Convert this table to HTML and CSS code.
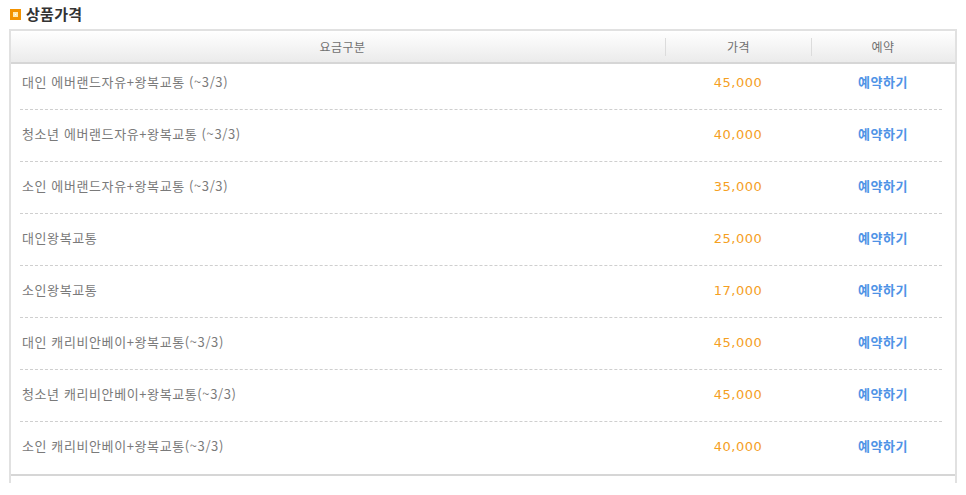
FILE: index.html
```html
<!DOCTYPE html>
<html lang="ko">
<head>
<meta charset="utf-8">
<title>상품가격</title>
<link rel="stylesheet" href="styles.css">
</head>
<body>
<div class="title">
  <span class="title-icon"></span>
  <h2 class="title-text">상품가격</h2>
</div>
<div class="box">
  <div class="head">
    <div class="hcell hcell-name">요금구분</div>
    <div class="hsep"></div>
    <div class="hcell">가격</div>
    <div class="hsep"></div>
    <div class="hcell">예약</div>
  </div>
  <div class="rows">
    <div class="row first"><div class="name">대인 에버랜드자유+왕복교통 (~3/3)</div><div class="price">45,000</div><div class="book"><a href="#">예약하기</a></div></div>
    <div class="row"><div class="name">청소년 에버랜드자유+왕복교통 (~3/3)</div><div class="price">40,000</div><div class="book"><a href="#">예약하기</a></div></div>
    <div class="row"><div class="name">소인 에버랜드자유+왕복교통 (~3/3)</div><div class="price">35,000</div><div class="book"><a href="#">예약하기</a></div></div>
    <div class="row"><div class="name">대인왕복교통</div><div class="price">25,000</div><div class="book"><a href="#">예약하기</a></div></div>
    <div class="row"><div class="name">소인왕복교통</div><div class="price">17,000</div><div class="book"><a href="#">예약하기</a></div></div>
    <div class="row"><div class="name">대인 캐리비안베이+왕복교통(~3/3)</div><div class="price">45,000</div><div class="book"><a href="#">예약하기</a></div></div>
    <div class="row"><div class="name">청소년 캐리비안베이+왕복교통(~3/3)</div><div class="price">45,000</div><div class="book"><a href="#">예약하기</a></div></div>
    <div class="row last"><div class="name">소인 캐리비안베이+왕복교통(~3/3)</div><div class="price">40,000</div><div class="book"><a href="#">예약하기</a></div></div>
  </div>
</div>
</body>
</html>
```
FILE: styles.css
```css
* { box-sizing: border-box; }
body {
  margin: 0;
  background: #fff;
  font-family: "Noto Sans CJK KR", "Noto Sans", sans-serif;
  color: #777;
}
.title {
  display: flex;
  align-items: center;
  height: 29px;
  padding-left: 10px;
  padding-bottom: 1px;
}
.title-icon {
  width: 11px;
  height: 11px;
  border: 3px solid #f39200;
  box-shadow: inset 0 0 0 2px #ffe8b0;
  background: #fff;
  margin-right: 5px;
}
.title-text {
  margin: 0;
  font-size: 15px;
  font-weight: bold;
  letter-spacing: 0.3px;
  color: #333;
  line-height: 16px;
}
.box {
  margin-left: 9px;
  width: 948px;
  border-left: 2px solid #e1e1e1;
  border-right: 2px solid #e1e1e1;
  padding-bottom: 7px;
}
.head {
  display: grid;
  grid-template-columns: 654px 1px 145px 1px 142px;
  align-items: center;
  height: 35px;
  border-top: 2px solid #e1e1e1;
  border-bottom: 2px solid #d6d6d6;
  background: linear-gradient(#ffffff, #ebebeb);
}
.hcell {
  text-align: center;
  font-size: 12px;
  letter-spacing: 0.5px;
  color: #707070;
  line-height: 16px;
}
.hcell-name { padding-left: 9px; }
.hsep {
  height: 18px;
  background: #dcdcdc;
}
.rows {
  border-bottom: 2px solid #d6d6d6;
  padding: 0 13px 0 9px;
}
.row {
  display: grid;
  grid-template-columns: 645px 146px 131px;
  align-items: start;
  height: 52px;
  padding-top: 16px;
  font-size: 13px;
  line-height: 16px;
  border-bottom: 1px dashed #cfcfcf;
}
.row.first { padding-top: 10px; height: 46px; }
.row.last { border-bottom: none; height: 52px; }
.name {
  padding-left: 2px;
  font-size: 13px;
  letter-spacing: 0.6px;
  color: #7a7a7a;
}
.price {
  text-align: center;
  font-family: "DejaVu Sans", sans-serif;
  font-size: 13px;
  letter-spacing: 0.5px;
  color: #f5a01f;
  padding-top: 1px;
}
.book {
  padding-left: 47px;
  font-size: 13px;
}
.book a {
  font-size: 13px;
  font-weight: bold;
  letter-spacing: 0.5px;
  color: #4f93e6;
  text-decoration: none;
}
```
